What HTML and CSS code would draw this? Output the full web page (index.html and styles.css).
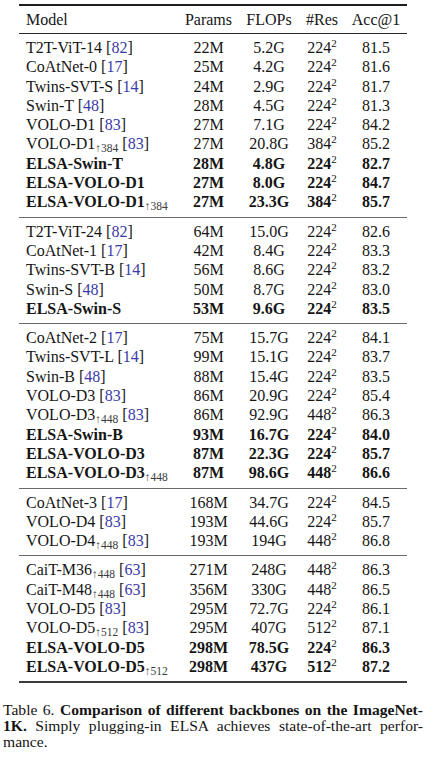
FILE: index.html
```html
<!DOCTYPE html>
<html lang="en">
<head>
  <meta charset="UTF-8">
  <title>Table 6 - ELSA backbones</title>
  <link rel="stylesheet" href="styles.css">
</head>
<body>

  <table class="results">
    <colgroup>
      <col class="c-model">
      <col class="c-params">
      <col class="c-flops">
      <col class="c-res">
      <col class="c-acc">
    </colgroup>
    <thead>
      <tr>
        <th class="model">Model</th>
        <th>Params</th>
        <th>FLOPs</th>
        <th>#Res</th>
        <th>Acc@1</th>
      </tr>
    </thead>

    <tbody>
      <tr><td class="model">T2T-ViT-14 [<span class="cite">82</span>]</td><td>22M</td><td>5.2G</td><td>224<sup>2</sup></td><td>81.5</td></tr>
      <tr><td class="model">CoAtNet-0 [<span class="cite">17</span>]</td><td>25M</td><td>4.2G</td><td>224<sup>2</sup></td><td>81.6</td></tr>
      <tr><td class="model">Twins-SVT-S [<span class="cite">14</span>]</td><td>24M</td><td>2.9G</td><td>224<sup>2</sup></td><td>81.7</td></tr>
      <tr><td class="model">Swin-T [<span class="cite">48</span>]</td><td>28M</td><td>4.5G</td><td>224<sup>2</sup></td><td>81.3</td></tr>
      <tr><td class="model">VOLO-D1 [<span class="cite">83</span>]</td><td>27M</td><td>7.1G</td><td>224<sup>2</sup></td><td>84.2</td></tr>
      <tr><td class="model">VOLO-D1<sub>↑384</sub> [<span class="cite">83</span>]</td><td>27M</td><td>20.8G</td><td>384<sup>2</sup></td><td>85.2</td></tr>
      <tr class="ours"><td class="model">ELSA-Swin-T</td><td>28M</td><td>4.8G</td><td>224<sup>2</sup></td><td>82.7</td></tr>
      <tr class="ours"><td class="model">ELSA-VOLO-D1</td><td>27M</td><td>8.0G</td><td>224<sup>2</sup></td><td>84.7</td></tr>
      <tr class="ours"><td class="model">ELSA-VOLO-D1<sub>↑384</sub></td><td>27M</td><td>23.3G</td><td>384<sup>2</sup></td><td>85.7</td></tr>
    </tbody>

    <tbody>
      <tr><td class="model">T2T-ViT-24 [<span class="cite">82</span>]</td><td>64M</td><td>15.0G</td><td>224<sup>2</sup></td><td>82.6</td></tr>
      <tr><td class="model">CoAtNet-1 [<span class="cite">17</span>]</td><td>42M</td><td>8.4G</td><td>224<sup>2</sup></td><td>83.3</td></tr>
      <tr><td class="model">Twins-SVT-B [<span class="cite">14</span>]</td><td>56M</td><td>8.6G</td><td>224<sup>2</sup></td><td>83.2</td></tr>
      <tr><td class="model">Swin-S [<span class="cite">48</span>]</td><td>50M</td><td>8.7G</td><td>224<sup>2</sup></td><td>83.0</td></tr>
      <tr class="ours"><td class="model">ELSA-Swin-S</td><td>53M</td><td>9.6G</td><td>224<sup>2</sup></td><td>83.5</td></tr>
    </tbody>

    <tbody>
      <tr><td class="model">CoAtNet-2 [<span class="cite">17</span>]</td><td>75M</td><td>15.7G</td><td>224<sup>2</sup></td><td>84.1</td></tr>
      <tr><td class="model">Twins-SVT-L [<span class="cite">14</span>]</td><td>99M</td><td>15.1G</td><td>224<sup>2</sup></td><td>83.7</td></tr>
      <tr><td class="model">Swin-B [<span class="cite">48</span>]</td><td>88M</td><td>15.4G</td><td>224<sup>2</sup></td><td>83.5</td></tr>
      <tr><td class="model">VOLO-D3 [<span class="cite">83</span>]</td><td>86M</td><td>20.9G</td><td>224<sup>2</sup></td><td>85.4</td></tr>
      <tr><td class="model">VOLO-D3<sub>↑448</sub> [<span class="cite">83</span>]</td><td>86M</td><td>92.9G</td><td>448<sup>2</sup></td><td>86.3</td></tr>
      <tr class="ours"><td class="model">ELSA-Swin-B</td><td>93M</td><td>16.7G</td><td>224<sup>2</sup></td><td>84.0</td></tr>
      <tr class="ours"><td class="model">ELSA-VOLO-D3</td><td>87M</td><td>22.3G</td><td>224<sup>2</sup></td><td>85.7</td></tr>
      <tr class="ours"><td class="model">ELSA-VOLO-D3<sub>↑448</sub></td><td>87M</td><td>98.6G</td><td>448<sup>2</sup></td><td>86.6</td></tr>
    </tbody>

    <tbody>
      <tr><td class="model">CoAtNet-3 [<span class="cite">17</span>]</td><td>168M</td><td>34.7G</td><td>224<sup>2</sup></td><td>84.5</td></tr>
      <tr><td class="model">VOLO-D4 [<span class="cite">83</span>]</td><td>193M</td><td>44.6G</td><td>224<sup>2</sup></td><td>85.7</td></tr>
      <tr><td class="model">VOLO-D4<sub>↑448</sub> [<span class="cite">83</span>]</td><td>193M</td><td>194G</td><td>448<sup>2</sup></td><td>86.8</td></tr>
    </tbody>

    <tbody class="last">
      <tr><td class="model">CaiT-M36<sub>↑448</sub> [<span class="cite">63</span>]</td><td>271M</td><td>248G</td><td>448<sup>2</sup></td><td>86.3</td></tr>
      <tr><td class="model">CaiT-M48<sub>↑448</sub> [<span class="cite">63</span>]</td><td>356M</td><td>330G</td><td>448<sup>2</sup></td><td>86.5</td></tr>
      <tr><td class="model">VOLO-D5 [<span class="cite">83</span>]</td><td>295M</td><td>72.7G</td><td>224<sup>2</sup></td><td>86.1</td></tr>
      <tr><td class="model">VOLO-D5<sub>↑512</sub> [<span class="cite">83</span>]</td><td>295M</td><td>407G</td><td>512<sup>2</sup></td><td>87.1</td></tr>
      <tr class="ours"><td class="model">ELSA-VOLO-D5</td><td>298M</td><td>78.5G</td><td>224<sup>2</sup></td><td>86.3</td></tr>
      <tr class="ours"><td class="model">ELSA-VOLO-D5<sub>↑512</sub></td><td>298M</td><td>437G</td><td>512<sup>2</sup></td><td>87.2</td></tr>
    </tbody>
  </table>

  <div class="caption">
    <span class="line">Table 6. <b>Comparison of different backbones on the ImageNet-</b></span>
    <span class="line"><b>1K.</b> Simply plugging-in ELSA achieves state-of-the-art perfor-</span>
    <span class="line last-line">mance.</span>
  </div>

</body>
</html>
```

FILE: styles.css
```css
body {
  margin: 0;
  background: #ffffff;
  color: #151515;
  font-family: 'Liberation Serif', 'Times New Roman', serif;
}

.results {
  margin: 4px 0 0 19px;
  width: 388px;
  table-layout: fixed;
  border-collapse: separate;
  border-spacing: 0;
  font-size: 16px;
  line-height: 19.3px;
}

.c-model { width: 159px; }
.c-params { width: 61px; }
.c-flops { width: 60px; }
.c-res { width: 46px; }
.c-acc { width: 62px; }

th,
td {
  padding: 0;
  text-align: center;
  font-weight: normal;
  white-space: nowrap;
}

th.model,
td.model {
  text-align: left;
  padding-left: 7px;
}

thead th {
  border-top: 2px solid #1e1e1e;
  border-bottom: 1px solid #2a2a2a;
  padding-top: 4px;
  padding-bottom: 3.7px;
}

tbody tr:first-child td {
  padding-top: 4px;
}

tbody tr:last-child td {
  padding-bottom: 5px;
  border-bottom: 1px solid #6a6a6a;
}

tbody.last tr:last-child td {
  border-bottom: 2px solid #3a3a3a;
}

.ours td {
  font-weight: bold;
}

.cite {
  color: #3a3aa8;
}

sup {
  font-size: 11px;
  line-height: 0;
  vertical-align: 6px;
  font-weight: normal;
}

sub {
  font-size: 11.5px;
  line-height: 0;
  vertical-align: -3px;
  font-weight: normal;
  color: #3a3a3a;
}

.caption {
  margin-top: 19px;
  padding: 0 1px 0 3px;
  font-size: 15.6px;
  line-height: 16px;
}

.caption .line {
  display: block;
  text-align: justify;
  text-align-last: justify;
}

.caption .last-line {
  text-align-last: left;
}
```
